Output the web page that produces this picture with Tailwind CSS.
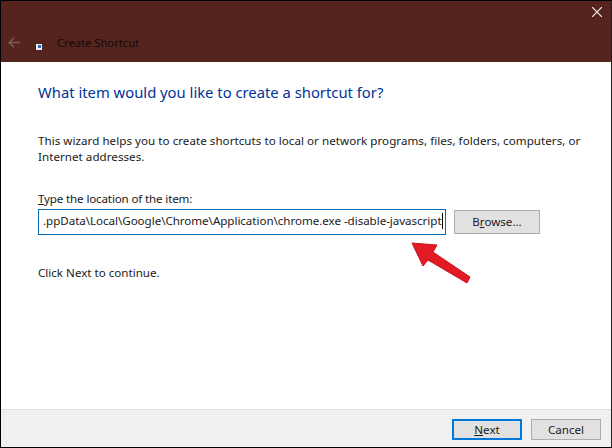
<!DOCTYPE html>
<html lang="en">
<head>
    <meta charset="UTF-8">
    <title>Create Shortcut</title>
    <script src="https://cdn.jsdelivr.net/npm/@tailwindcss/browser@4"></script>
</head>
<body class="bg-white">
    <div class="relative w-[612px] h-[448px] flex flex-col overflow-hidden border border-black border-r-[#222] font-['Noto_Sans',sans-serif] text-[11.6px] text-[#1a1a1a]">
        <!-- Title bar -->
        <div class="h-[61px] shrink-0 bg-[#55241f] flex items-start relative">
            <svg class="mt-[36px] ml-[7px]" width="12" height="11" viewBox="0 0 12 11" fill="none" stroke="#7f5c58" stroke-width="1.5">
                <path d="M12 5.5H1.2M6 .7L1.2 5.5 6 10.3"/>
            </svg>
            <svg class="mt-[43px] ml-[16px]" width="6" height="6" viewBox="0 0 6 6">
                <rect width="6" height="6" fill="#e8eef5"/>
                <rect x="2" y="1" width="3" height="3" fill="#2a6fc0"/>
            </svg>
            <span class="mt-[33px] ml-[15px] text-[11.2px] leading-[18px] text-[#140806]">Create Shortcut</span>
            <svg class="absolute right-[9px] top-[6px]" width="10" height="10" viewBox="0 0 10 10" stroke="#f2eeee" stroke-width="1.2">
                <path d="M0 0l10 10M10 0L0 10"/>
            </svg>
        </div>

        <!-- Content -->
        <main class="flex-1 pl-[37px] pr-[30px] flex flex-col">
            <h1 class="mt-[19px] text-[14.8px] leading-[22px] text-[#003399]">What item would you like to create a shortcut for?</h1>
            <p class="mt-[30px] leading-[16px] w-[545px] tracking-[0.04px]">This wizard helps you to create shortcuts to local or network programs, files, folders, computers, or Internet addresses.</p>
            <label class="mt-[26px] leading-[16px] tracking-[-0.15px]"><span class="underline">T</span>ype the location of the item:</label>
            <div class="mt-[2px] flex items-start gap-[8px]">
                <div class="w-[408px] h-[26px] border border-[#0a6cb4] pl-[4px] pb-[2px] whitespace-nowrap overflow-hidden flex items-center tracking-[-0.04px]">
                    <span>.ppData\Local\Google\Chrome\Application\chrome.exe -disable-javascript</span><span class="w-px h-[16px] bg-black shrink-0"></span>
                </div>
                <button class="mt-[1px] w-[86px] h-[24px] bg-[#e1e1e1] border border-[#adadad] text-center">B<span class="underline">r</span>owse...</button>
            </div>
            <p class="mt-[30px] leading-[16px]">Click Next to continue.</p>
        </main>

        <!-- Footer -->
        <footer class="h-[38px] shrink-0 bg-[#f0f0f0] border-t border-[#dfdfdf] flex justify-end items-start pt-[9px] pr-[10px] gap-[9px]">
            <button class="w-[70px] h-[21px] bg-[#e1e1e1] border-2 border-[#0078d7] text-center leading-[17px]"><span class="underline">N</span>ext</button>
            <button class="w-[70px] h-[21px] bg-[#e1e1e1] border border-[#adadad] text-center leading-[19px]">Cancel</button>
        </footer>

        <!-- Red annotation arrow -->
        <svg class="absolute left-[409px] top-[241px]" width="64" height="44" viewBox="0 0 64 44">
            <path d="M2 1L27 3 23 10 60 35 57 41 18 18 13 24Z" fill="#e21a23" stroke="#c9141c" stroke-width="1"/>
        </svg>
    </div>
</body>
</html>
